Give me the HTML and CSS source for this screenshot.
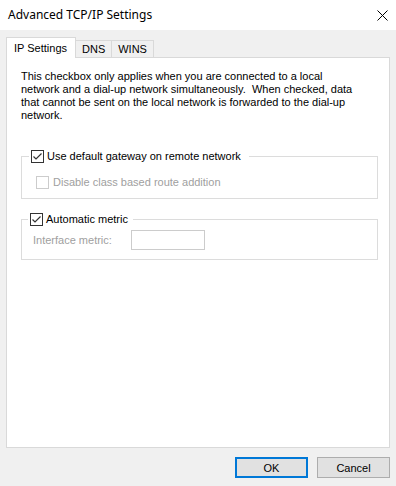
FILE: index.html
```html
<!DOCTYPE html>
<html lang="en">
<head>
    <meta charset="UTF-8">
    <title>Advanced TCP/IP Settings</title>
    <link rel="stylesheet" href="styles.css">
</head>
<body>
    <div class="window">
        <div class="titlebar">
            <span class="title">Advanced TCP/IP Settings</span>
            <svg class="close" width="11" height="11" viewBox="0 0 11 11">
                <path d="M0.5 0.5 L10.5 10.5 M10.5 0.5 L0.5 10.5" stroke="#000" stroke-width="1" fill="none"/>
            </svg>
        </div>

        <div class="content">
            <div class="tabs">
                <div class="tab active">IP Settings</div>
                <div class="tab">DNS</div>
                <div class="tab">WINS</div>
            </div>

            <div class="panel">
                <p class="note">
                    This checkbox only applies when you are connected to a local<br>
                    network and a dial-up network simultaneously.&nbsp; When checked, data<br>
                    that cannot be sent on the local network is forwarded to the dial-up<br>
                    network.
                </p>

                <fieldset class="group first">
                    <legend>
                        <span class="check checked">
                            <svg width="13" height="13" viewBox="0 0 13 13"><path d="M2.5 6.5 L5 9 L10.5 3.5" stroke="#333" stroke-width="1.2" fill="none"/></svg>
                        </span>
                        Use default gateway on remote network
                    </legend>
                    <div class="row disabled">
                        <span class="check"></span>
                        Disable class based route addition
                    </div>
                </fieldset>

                <fieldset class="group second">
                    <legend>
                        <span class="check checked">
                            <svg width="13" height="13" viewBox="0 0 13 13"><path d="M2.5 6.5 L5 9 L10.5 3.5" stroke="#333" stroke-width="1.2" fill="none"/></svg>
                        </span>
                        Automatic metric
                    </legend>
                    <div class="row disabled metric">
                        <span class="label">Interface metric:</span>
                        <span class="textbox"></span>
                    </div>
                </fieldset>
            </div>

            <div class="buttons">
                <button class="btn default">OK</button>
                <button class="btn">Cancel</button>
            </div>
        </div>
    </div>
</body>
</html>
```

FILE: styles.css
```css
body {
    margin: 0;
    font-family: "Liberation Sans", Arial, sans-serif;
    font-size: 11px;
    color: #000;
    background-color: #f0f0f0;
}
.window {
    width: 396px;
    height: 486px;
    display: flex;
    flex-direction: column;
}
.titlebar {
    height: 30px;
    background-color: #fff;
    display: flex;
    align-items: center;
    justify-content: space-between;
    padding: 0 8px;
}
.title {
    font-family: "Noto Sans", sans-serif;
    font-size: 12px;
    margin-top: -1px;
}
.content {
    flex: 1;
    background-color: #f0f0f0;
    padding: 7px 6px 0 6px;
    display: flex;
    flex-direction: column;
}
.tabs {
    display: flex;
    align-items: flex-end;
    height: 20px;
    position: relative;
    z-index: 1;
}
.tab {
    height: 17px;
    box-sizing: border-box;
    border: 1px solid #d9d9d9;
    border-bottom: none;
    border-left: none;
    padding: 0 6px;
    line-height: 16px;
    background-color: #f0f0f0;
}
.tab.active {
    height: 21px;
    margin-bottom: -1px;
    border-left: 1px solid #d9d9d9;
    background-color: #fff;
    padding: 0 8px 0 7px;
    line-height: 20px;
}
.panel {
    height: 391px;
    box-sizing: border-box;
    background-color: #fff;
    border: 1px solid #d9d9d9;
    padding: 12px 11px 0 14px;
}
.note {
    margin: 0;
    line-height: 13px;
}
.group {
    margin: 28px 0 0 0;
    border: 1px solid #dcdcdc;
    padding: 12px 0 8px 0;
}
.group.second {
    margin-top: 14px;
    padding: 4px 0 9px 0;
}
.group legend {
    margin-left: 7px;
    padding: 0 8px 0 2px;
    display: flex;
    align-items: center;
    gap: 3px;
    line-height: 13px;
}
.group.second legend {
    margin-left: 6px;
    padding-right: 5px;
}
.check {
    display: inline-block;
    width: 13px;
    height: 13px;
    box-sizing: border-box;
    border: 1px solid #cccccc;
    background-color: #fff;
}
.check.checked {
    border-color: #333;
}
.check svg {
    display: block;
    margin: -1px;
}
.row {
    display: flex;
    align-items: center;
    gap: 4px;
    line-height: 15px;
    padding-left: 14px;
}
.disabled {
    color: #a0a0a0;
}
.metric {
    gap: 19px;
    padding-left: 11px;
}
.textbox {
    width: 74px;
    height: 20px;
    box-sizing: border-box;
    border: 1px solid #cccccc;
}
.buttons {
    display: flex;
    justify-content: flex-end;
    gap: 9px;
    margin-top: 9px;
}
.btn {
    width: 73px;
    height: 21px;
    font-family: "Liberation Sans", Arial, sans-serif;
    font-size: 11px;
    color: #000;
    background-color: #e1e1e1;
    border: 1px solid #adadad;
    padding: 0;
}
.btn.default {
    border: 2px solid #0078d7;
}
```
